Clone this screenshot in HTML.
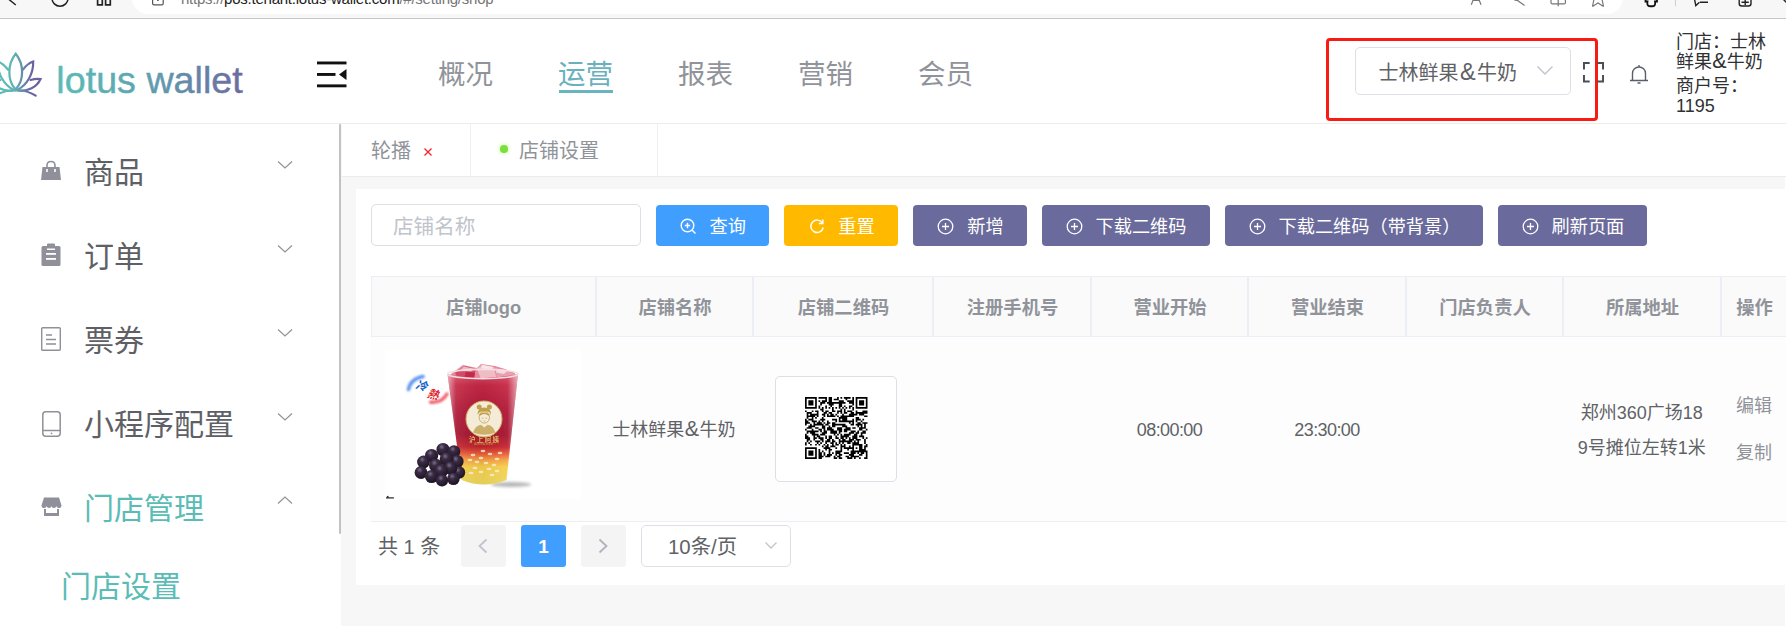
<!DOCTYPE html>
<html lang="zh-CN">
<head>
<meta charset="utf-8">
<title>店铺设置</title>
<style>
*{box-sizing:border-box;margin:0;padding:0}
html,body{width:1786px;height:626px;overflow:hidden;background:#fff}
body{font-family:"Liberation Sans","Noto Sans CJK SC",sans-serif;color:#606266;position:relative}
.a{position:absolute;white-space:nowrap}
/* browser chrome */
#chrome{left:0;top:0;width:1786px;height:18px;background:#f7f7f7}
#chromeline{left:0;top:18px;width:1786px;height:1px;background:#c6c6c6}
#addr{left:132px;top:-20px;width:1491px;height:33.7px;background:#fff;border-radius:16px}
#url{left:181px;top:-11px;font-size:15px;line-height:20px;color:#767676;letter-spacing:-0.24px}
#url b{font-weight:400;color:#1b1b1b}
/* header */
#header{left:0;top:19px;width:1786px;height:104px;background:#fff}
#hline{left:0;top:123px;width:1786px;height:1px;background:#ececec}
.nav{font-size:27.5px;line-height:40px;color:#909399;top:54.5px}
#logo-text{left:56px;top:56px;font-size:37px;line-height:44px;letter-spacing:0.5px;
  background:linear-gradient(90deg,#5bbcb6 0%,#5fa5b0 45%,#6b6aa0 100%);-webkit-background-clip:text;background-clip:text;color:transparent}
/* sidebar */
#side{left:0;top:124px;width:339px;height:502px;background:#fff}
.mi{left:84px;font-size:30px;line-height:44px;color:#5e6066}
.chev{left:277px}
#sbar{left:339px;top:124px;width:2.4px;height:410px;background:#c2c2c2;border-radius:1.2px}
/* main */
#main{left:341px;top:124px;width:1444px;height:502px;background:#f7f7f7}
#tabs{left:342px;top:124px;width:1444px;height:52px;background:#fff}
#tabsline{left:342px;top:176px;width:1444px;height:1px;background:#ececec}
.tab{top:135.9px;font-size:20px;line-height:30px;color:#909399}
#card{left:356px;top:189px;width:1430px;height:396px;background:#fff}
#inp{left:371px;top:204px;width:270px;height:42px;border:1px solid #dcdfe6;border-radius:5px;background:#fff}
#ph{left:393px;top:211.8px;font-size:20.6px;line-height:30px;color:#c0c4cc}
.btn{top:205px;height:41px;border-radius:4px;color:#fff;font-size:18.2px;line-height:41px}
.btn span{position:absolute;top:2.3px;white-space:nowrap}
.btn svg{position:absolute;top:13px}
.pur{background:#6a6a9c}
/* table */
#thead{left:371px;top:276px;width:1415px;height:61px;background:#fafafa;border-top:1px solid #ebeef5;border-bottom:1px solid #ebeef5;border-left:1px solid #ebeef5}
.th{top:276px;height:61px;border-right:2px solid #ebeef5;font-size:18.3px;font-weight:bold;color:#909399;line-height:63.4px;padding-left:1px;text-align:center}
#row{left:371px;top:337px;width:1415px;height:184px;background:#fdfdfd}
#rowline{left:371px;top:521px;width:1415px;height:1px;background:#ebeef5}
.td{font-size:18px;line-height:30px;color:#606266;text-align:center}
</style>
</head>
<body>
<!-- browser chrome -->
<div class="a" id="chrome"></div>
<div class="a" id="addr"></div>
<div class="a" id="url">https://<b>pos.tenant.lotus-wallet.com</b>/#/setting/shop</div>
<svg class="a" style="left:0;top:0" width="1786" height="18" viewBox="0 0 1786 18" fill="none" stroke="#222" stroke-width="1.5">
<path d="M9 -0.5L15.8 5"/>
<circle cx="60" cy="-1.8" r="8"/>
<path d="M97.6 -2V4.9H102.3V-1H105.6V4.9H110.3V-2" stroke-width="1.7"/>
<path d="M152.6 -2V3.4Q152.6 4.8 154 4.8H161.8Q163.2 4.8 163.2 3.4V-2" stroke="#555" stroke-width="1.2"/>
<circle cx="157.9" cy="0.2" r="0.9" fill="#555" stroke="none"/>
<g stroke="#777" stroke-width="1.2">
<path d="M1471.3 4.8L1473.5 -1M1481 4.8L1478.8 -1M1473 0.3H1479.3"/>
<path d="M1513 -1.5Q1515 1.2 1518.5 0.2M1517.5 0.5L1524.6 5.5"/>
<path d="M1551 -2V2.8Q1551 3.9 1552.2 3.9H1564.2Q1565.4 3.9 1565.4 2.8V-2M1558.2 -2V6.2"/>
<path d="M1592.5 6.5L1594 -1M1603.5 6.5L1602 -1M1592.5 6.5L1598 3L1603.5 6.5"/>
</g>
<path d="M1645.5 -1V1.5H1647.5Q1646.5 6.8 1651.3 6.2Q1656 6.8 1655 1.5H1657V-1" stroke="#111" stroke-width="1.8"/>
<path d="M1675.5 0V6.2" stroke="#cfcfcf" stroke-width="1"/>
<path d="M1694.5 -1L1695.8 5.6L1699.5 2.2M1700 2.3H1708" stroke="#222" stroke-width="1.4"/>
<path d="M1739.2 -2V3.5Q1739.2 6 1741.7 6H1748.5Q1751 6 1751 3.5V-2M1741.5 2.2H1748.8M1745.2 -1V5" stroke="#222" stroke-width="1.4"/>
<path d="M1783 -1L1787 3" stroke="#222" stroke-width="1.4"/>
</svg>
<div class="a" id="chromeline"></div>

<!-- header -->
<div class="a" id="header"></div>
<div class="a" id="hline"></div>
<svg class="a" id="lotus" style="left:0;top:40px;overflow:visible" width="60" height="70" viewBox="0 40 60 70" fill="none" stroke-width="2.2" stroke-linecap="round">
<defs><linearGradient id="lg" gradientUnits="userSpaceOnUse" x1="5" y1="0" x2="32" y2="0"><stop offset="0" stop-color="#5bbcb6"/><stop offset="0.35" stop-color="#5fb0b4"/><stop offset="1" stop-color="#6b62a0"/></linearGradient></defs>
<g stroke="url(#lg)">
<path d="M15.5 89.5C7 80 7.5 64 15.7 53.8C24 64 24.5 80 15.5 89.5Z"/>
<path d="M23 69.5Q27.5 63.5 33.2 61.5C33.5 74 27 85 17.5 89.8"/>
<path d="M30.5 80Q35.5 78.5 40.5 79C37 87 28 92 17 90.5"/>
<path d="M15.5 90.3C24 90 30 92 35.7 95.7"/>
<path d="M8 69.5Q3.5 63.5 -2.2 61.5C-2.5 74 4 85 13.5 89.8"/>
<path d="M0.5 80Q-4.5 78.5 -9.5 79C-6 87 3 92 14 90.5"/>
<path d="M15.5 90.3C7 90 1 92 -4.7 95.7"/>
</g>
</svg>
<svg class="a" style="left:50px;top:50px" width="210" height="56" viewBox="0 0 210 56"><defs><linearGradient id="lg2" gradientUnits="userSpaceOnUse" x1="6" y1="0" x2="194" y2="0"><stop offset="0" stop-color="#5bbcb6"/><stop offset="0.45" stop-color="#5fa5b0"/><stop offset="1" stop-color="#6b6aa0"/></linearGradient></defs><text x="6.3" y="42.5" font-family="'Liberation Sans',sans-serif" font-size="37.6" letter-spacing="0.05" fill="url(#lg2)" stroke="url(#lg2)" stroke-width="0.45">lotus wallet</text></svg>

<svg class="a" style="left:316.5px;top:61px" width="32" height="28" viewBox="0 0 32 28"><rect x="0" y="0.5" width="29.5" height="2.9" fill="#111"/><rect x="0" y="12" width="18.5" height="2.9" fill="#111"/><rect x="0" y="23.4" width="29.5" height="2.9" fill="#111"/><path d="M29.5 8 L29.5 19 L22 13.5Z" fill="#111"/></svg>

<div class="a nav" style="left:438px">概况</div>
<div class="a nav" style="left:558px;color:#6ab0bd">运营</div>
<div class="a" style="left:559px;top:89.7px;width:54px;height:3.8px;background:#6ab3c0"></div>
<div class="a nav" style="left:678px">报表</div>
<div class="a nav" style="left:798px">营销</div>
<div class="a nav" style="left:918px">会员</div>

<div class="a" style="left:1355px;top:47px;width:216px;height:48px;border:1px solid #dcdfe6;border-radius:5px;background:#fff"></div>
<div class="a" style="left:1378.5px;top:58px;font-size:20px;line-height:30px;color:#606266">士林鲜果<span style="font-size:23.5px;line-height:0;margin:0 1.2px 0 1.6px">&amp;</span>牛奶</div>
<svg class="a" style="left:1536px;top:65px" width="18" height="12" viewBox="0 0 18 12"><path d="M1.5 1.5 L9 9 L16.5 1.5" fill="none" stroke="#c0c4cc" stroke-width="1.4"/></svg>
<div class="a" style="left:1326px;top:38px;width:272px;height:83px;border:3px solid #fa1a14;border-radius:4px"></div>
<svg class="a" style="left:1583px;top:62px" width="21" height="20.5" viewBox="0 0 22 22" preserveAspectRatio="none" fill="none" stroke="#4a4f57" stroke-width="2.1"><path d="M1 8V1H7M15 1H21V8M21 14V21H15M7 21H1V14"/></svg>
<svg class="a" style="left:1628px;top:63px" width="22" height="22" viewBox="0 0 22 22" fill="none" stroke="#5a5e66" stroke-width="1.4"><path d="M2 17.5H20M4.5 17.5V10.5C4.5 6.5 7.5 4 11 4S17.5 6.5 17.5 10.5V17.5M11 4V2M9.5 20H12.5"/></svg>
<div class="a" style="left:1676px;top:32px;font-size:18px;line-height:20px;color:#303133">门店：士林<br>鲜果<span style="font-size:21.5px;line-height:0;margin:0 0.2px">&amp;</span>牛奶</div><div class="a" style="left:1676px;top:76px;font-size:18px;line-height:20px;color:#303133">商户号：<br>1195</div>

<!-- sidebar -->
<div class="a" id="side"></div>
<div class="a mi" style="top:151px">商品</div>
<div class="a mi" style="top:235px">订单</div>
<div class="a mi" style="top:319px">票券</div>
<div class="a mi" style="top:403px">小程序配置</div>
<div class="a mi" style="top:487px;color:#5bbcb6">门店管理</div>
<div class="a mi" style="top:565px;left:61px;color:#5bbcb6">门店设置</div>
<svg class="a chev" style="top:160px" width="16" height="10" viewBox="0 0 16 10"><path d="M1 1.5 L8 8 L15 1.5" fill="none" stroke="#909399" stroke-width="1.2"/></svg>
<svg class="a chev" style="top:244px" width="16" height="10" viewBox="0 0 16 10"><path d="M1 1.5 L8 8 L15 1.5" fill="none" stroke="#909399" stroke-width="1.2"/></svg>
<svg class="a chev" style="top:328px" width="16" height="10" viewBox="0 0 16 10"><path d="M1 1.5 L8 8 L15 1.5" fill="none" stroke="#909399" stroke-width="1.2"/></svg>
<svg class="a chev" style="top:412px" width="16" height="10" viewBox="0 0 16 10"><path d="M1 1.5 L8 8 L15 1.5" fill="none" stroke="#909399" stroke-width="1.2"/></svg>
<svg class="a chev" style="top:495px" width="16" height="10" viewBox="0 0 16 10"><path d="M1 8.5 L8 2 L15 8.5" fill="none" stroke="#909399" stroke-width="1.2"/></svg>
<!-- sidebar icons -->
<svg class="a" style="left:40px;top:160px" width="22" height="22" viewBox="0 0 22 22"><path d="M2.5 7H19.5L21 20H1Z" fill="#8f9099"/><path d="M7 9V5.5C7 2.8 8.8 1.5 11 1.5S15 2.8 15 5.5V9" fill="none" stroke="#8f9099" stroke-width="1.6"/><rect x="6.2" y="9" width="1.6" height="3" fill="#fff"/><rect x="14.2" y="9" width="1.6" height="3" fill="#fff"/></svg>
<svg class="a" style="left:41px;top:243px" width="20" height="24" viewBox="0 0 20 24"><rect x="0.5" y="3" width="19" height="20" rx="1.5" fill="#8f9099"/><rect x="6" y="0.5" width="8" height="5" rx="1" fill="#8f9099"/><rect x="5" y="10" width="10" height="1.8" fill="#fff"/><rect x="5" y="15" width="10" height="1.8" fill="#fff"/><rect x="6" y="5.5" width="8" height="1.5" fill="#fff"/></svg>
<svg class="a" style="left:41px;top:327px" width="20" height="24" viewBox="0 0 20 24" fill="none" stroke="#8f9099" stroke-width="1.4"><rect x="0.7" y="0.7" width="18.6" height="22.6" rx="1"/><path d="M5 8H11M5 12.5H15M5 17H15"/></svg>
<svg class="a" style="left:42px;top:411px" width="19" height="26" viewBox="0 0 19 26" fill="none" stroke="#8f9099" stroke-width="1.5"><rect x="0.8" y="0.8" width="17.4" height="24.4" rx="3"/><path d="M1 19.5H18"/><circle cx="9.5" cy="22.3" r="0.9" fill="#8f9099" stroke="none"/></svg>
<svg class="a" style="left:41px;top:497px" width="21" height="21" viewBox="0 0 21 21"><path d="M3 0.5H18L20.5 8.5C20.5 10.5 19 11 17.8 11S15.6 10.3 15.4 9C15.2 10.3 14 11 12.9 11S10.7 10.3 10.5 9C10.3 10.3 9.2 11 8.1 11S5.8 10.3 5.6 9C5.4 10.3 4.3 11 3.2 11S0.5 10.5 0.5 8.5Z" fill="#8f9099"/><path d="M3 12V19H18V12H16V16H5V12Z" fill="#8f9099"/></svg>

<div class="a" id="main"></div>
<div class="a" id="sbar"></div>
<div class="a" id="tabs"></div>
<div class="a" id="tabsline"></div>
<div class="a" style="left:470px;top:124px;width:1px;height:52px;background:#f0f0f0"></div>
<div class="a" style="left:657px;top:124px;width:1px;height:52px;background:#f0f0f0"></div>
<div class="a tab" style="left:371px">轮播</div>
<svg class="a" style="left:423px;top:147px" width="10" height="10" viewBox="0 0 10 10"><path d="M1.5 1.5L8.5 8.5M8.5 1.5L1.5 8.5" stroke="#f5222d" stroke-width="1.3"/></svg>
<div class="a" style="left:500.2px;top:145px;width:7.6px;height:7.6px;border-radius:50%;background:#7be03a;box-shadow:0 0 4px 1px #d6f7c0"></div>
<div class="a tab" style="left:519px">店铺设置</div>

<div class="a" id="card"></div>
<div class="a" id="inp"></div>
<div class="a" id="ph">店铺名称</div>

<div class="a btn" style="left:656px;width:113px;background:#409eff"><svg style="left:24px" width="17" height="17" viewBox="0 0 17 17" fill="none" stroke="#fff" stroke-width="1.4"><circle cx="7.5" cy="7.5" r="6.3"/><path d="M12.2 12.2L15.5 15.5M4.8 7.5H10.2M7.5 4.8V10.2"/></svg><span style="left:53.5px">查询</span></div>
<div class="a btn" style="left:784px;width:114px;background:#ffba00"><svg style="left:25px" width="16" height="16" viewBox="0 0 16 16" fill="none" stroke="#fff" stroke-width="1.5"><path d="M13.5 5.2A6.2 6.2 0 1 0 14.2 9.5M13.8 1.5V5.4H9.9"/></svg><span style="left:54.3px">重置</span></div>
<div class="a btn pur" style="left:913px;width:114px"><svg style="left:24px" width="17" height="17" viewBox="0 0 17 17" fill="none" stroke="#fff" stroke-width="1.3"><circle cx="8.5" cy="8.5" r="7.3"/><path d="M5 8.5H12M8.5 5V12"/></svg><span style="left:54.3px">新增</span></div>
<div class="a btn pur" style="left:1042px;width:168px"><svg style="left:24px" width="17" height="17" viewBox="0 0 17 17" fill="none" stroke="#fff" stroke-width="1.3"><circle cx="8.5" cy="8.5" r="7.3"/><path d="M5 8.5H12M8.5 5V12"/></svg><span style="left:53.5px">下载二维码</span></div>
<div class="a btn pur" style="left:1225px;width:258px"><svg style="left:24px" width="17" height="17" viewBox="0 0 17 17" fill="none" stroke="#fff" stroke-width="1.3"><circle cx="8.5" cy="8.5" r="7.3"/><path d="M5 8.5H12M8.5 5V12"/></svg><span style="left:53.5px">下载二维码（带背景）</span></div>
<div class="a btn pur" style="left:1498px;width:149px"><svg style="left:24px" width="17" height="17" viewBox="0 0 17 17" fill="none" stroke="#fff" stroke-width="1.3"><circle cx="8.5" cy="8.5" r="7.3"/><path d="M5 8.5H12M8.5 5V12"/></svg><span style="left:53.5px">刷新页面</span></div>

<!-- table -->
<div class="a" id="thead"></div>
<div class="a th" style="left:371px;width:226px">店铺logo</div>
<div class="a th" style="left:597px;width:157px">店铺名称</div>
<div class="a th" style="left:754px;width:180px">店铺二维码</div>
<div class="a th" style="left:934px;width:158px">注册手机号</div>
<div class="a th" style="left:1092px;width:157px">营业开始</div>
<div class="a th" style="left:1249px;width:158px">营业结束</div>
<div class="a th" style="left:1407px;width:157px">门店负责人</div>
<div class="a th" style="left:1564px;width:158px">所属地址</div>
<div class="a th" style="left:1722px;width:64px;border-right:0">操作</div>
<div class="a" id="row"></div>
<div class="a" id="rowline"></div>

<svg class="a" id="pimg" style="left:385px;top:349px" width="196" height="150" viewBox="0 0 196 150">
<defs>
<linearGradient id="cupv" x1="0" y1="0" x2="0" y2="1">
<stop offset="0" stop-color="#d8506a"/><stop offset="0.10" stop-color="#c62845"/><stop offset="0.35" stop-color="#ae1836"/><stop offset="0.55" stop-color="#a51530"/><stop offset="0.66" stop-color="#c4252f"/><stop offset="0.72" stop-color="#e85a38"/><stop offset="0.78" stop-color="#f5a445"/><stop offset="0.84" stop-color="#f6cf4c"/><stop offset="1" stop-color="#ecd75e"/>
</linearGradient>
<linearGradient id="cuph" x1="0" y1="0" x2="1" y2="0">
<stop offset="0" stop-color="#fff" stop-opacity="0.55"/><stop offset="0.12" stop-color="#fff" stop-opacity="0.08"/><stop offset="0.5" stop-color="#000" stop-opacity="0.04"/><stop offset="0.85" stop-color="#fff" stop-opacity="0.05"/><stop offset="1" stop-color="#fff" stop-opacity="0.6"/>
</linearGradient>
<radialGradient id="berry" cx="0.4" cy="0.3" r="0.75"><stop offset="0" stop-color="#77708a"/><stop offset="0.3" stop-color="#3b2c44"/><stop offset="1" stop-color="#1a111f"/></radialGradient>
<filter id="bl1" x="-30%" y="-30%" width="160%" height="160%"><feGaussianBlur stdDeviation="1"/></filter>
<filter id="bl2" x="-30%" y="-80%" width="160%" height="260%"><feGaussianBlur stdDeviation="1.6"/></filter>
<filter id="bl3" x="-10%" y="-10%" width="120%" height="120%"><feGaussianBlur stdDeviation="0.35"/></filter>
</defs>
<rect width="196" height="150" fill="#fff"/>
<ellipse cx="126" cy="135.5" rx="20" ry="2.6" fill="#000" opacity="0.28" filter="url(#bl2)"/>
<g filter="url(#bl3)">
<!-- ice -->
<path d="M66 25 L78 16 L92 19 L96 15 L110 17 L120 20 L130 24 L128 33 L68 33Z" fill="#e58a9c"/>
<path d="M70 24 L80 17 L91 20 L88 30 L74 31Z" fill="#d44a66"/>
<path d="M92 20 L97 15.5 L109 18 L111 28 L96 30Z" fill="#f0bcc6"/>
<path d="M110 19 L120 21 L129 25 L124 31 L112 29Z" fill="#e9a0af"/>
<path d="M81 22 L90 24 L89 31 L79 30Z" fill="#c22a49"/><path d="M97 16 L108 18 L106 21 L96 19.5Z" fill="#fbe6ea"/><path d="M79 17.5 L90 20 L86 22.5 L74 22Z" fill="#f1b7c2"/><path d="M112 20 L122 22 L119 25 L111 23.5Z" fill="#f8d9df"/>
<!-- cup -->
<path d="M62.5 25 Q98 33 133 25 L121.5 131 Q99 140 76.5 131Z" fill="url(#cupv)"/>
<path d="M62.5 25 Q98 33 133 25 L121.5 131 Q99 140 76.5 131Z" fill="url(#cuph)"/>
<ellipse cx="97.8" cy="25" rx="35.3" ry="4.6" fill="none" stroke="#f4dfe3" stroke-width="1.6"/>
<!-- pearls -->
<g fill="#fbeed4" opacity="0.8"><ellipse cx="88" cy="106" rx="2.4" ry="1.2"/><ellipse cx="96" cy="109" rx="2.4" ry="1.2"/><ellipse cx="105" cy="105" rx="2.4" ry="1.2"/><ellipse cx="112" cy="110" rx="2.4" ry="1.2"/><ellipse cx="92" cy="113" rx="2.4" ry="1.2"/><ellipse cx="101" cy="114" rx="2.4" ry="1.2"/><ellipse cx="109" cy="116" rx="2.4" ry="1.2"/><ellipse cx="85" cy="111" rx="2.4" ry="1.2"/><ellipse cx="115" cy="104" rx="2.4" ry="1.2"/><ellipse cx="98" cy="102" rx="2.4" ry="1.2"/><ellipse cx="90" cy="119" rx="2.4" ry="1.2"/><ellipse cx="104" cy="120" rx="2.4" ry="1.2"/><ellipse cx="112" cy="122" rx="2.4" ry="1.2"/><ellipse cx="96" cy="123" rx="2.4" ry="1.2"/><ellipse cx="86" cy="124" rx="2.4" ry="1.2"/><ellipse cx="107" cy="126" rx="2.4" ry="1.2"/></g>
<!-- logo -->
<circle cx="99" cy="70" r="18" fill="#f4ecd9" stroke="#cfae62" stroke-width="1"/>
<g fill="#c2a04c"><circle cx="94.2" cy="58" r="2.5"/><circle cx="104.4" cy="58" r="2.5"/><path d="M92.6 66 Q92.4 58.6 99.3 58.6 Q106.2 58.6 106 66 L104.6 63.5 Q99 61 94 63.8Z"/><path d="M88 83.5 Q90.5 76.5 96 75.8 L99.3 78.5 L102.6 75.8 Q108 76.5 110.5 83.5 Q99.3 88 88 83.5Z" opacity="0.8"/></g>
<ellipse cx="99.3" cy="68.3" rx="5.2" ry="5.8" fill="#f4ecd9" stroke="#c2a04c" stroke-width="0.8"/>
<path d="M94.5 66 Q99 62.5 104.2 66" fill="none" stroke="#c2a04c" stroke-width="1.6"/>
<path d="M96.8 69.2H98.4M100.4 69.2H102M98.6 71.8Q99.4 72.4 100.2 71.8" fill="none" stroke="#b08c3a" stroke-width="0.6"/>
<text x="99" y="92.5" text-anchor="middle" font-family="'Liberation Sans','Noto Sans CJK SC',sans-serif" font-size="6.5" font-weight="bold" fill="#dcb95c" textLength="30">沪上阿姨</text>
<text x="99" y="96" text-anchor="middle" font-family="'Liberation Sans',sans-serif" font-size="2.6" fill="#c9a653">AUNTEA JENNY</text>
<!-- berries -->
<g fill="url(#berry)"><circle cx="58" cy="100.5" r="6.6"/><circle cx="69" cy="102.5" r="6.3"/><circle cx="46.6" cy="106.5" r="6.6"/><circle cx="72" cy="112.5" r="6.6"/><circle cx="38.5" cy="113" r="6.4"/><circle cx="61.6" cy="110" r="6.9"/><circle cx="50.7" cy="116.5" r="6.7"/><circle cx="74" cy="123.5" r="6.2"/><circle cx="65.6" cy="119" r="6.7"/><circle cx="36" cy="123.5" r="6.4"/><circle cx="56" cy="122" r="6.9"/><circle cx="46.6" cy="127.5" r="6.6"/><circle cx="68.4" cy="129.8" r="6.3"/><circle cx="57" cy="131.5" r="6.1"/></g>
</g>
<!-- badge -->
<path d="M23.5 40.5 Q25.5 30 38 27.6" fill="none" stroke="#4d8cf0" stroke-width="3.6" stroke-linecap="round" filter="url(#bl1)" opacity="0.9"/>
<path d="M45.5 53.2 Q57 54 62 45" fill="none" stroke="#f0505a" stroke-width="3.4" stroke-linecap="round" filter="url(#bl1)" opacity="0.9"/>
<text x="31" y="40.5" font-family="'Liberation Sans','Noto Sans CJK SC',sans-serif" font-size="11.5" font-weight="bold" font-style="italic" fill="#1b5fc8" transform="rotate(14 36 36)">冷</text>
<text x="42.5" y="49.5" font-family="'Liberation Sans','Noto Sans CJK SC',sans-serif" font-size="11.5" font-weight="bold" font-style="italic" fill="#e0262e" transform="rotate(14 48 45)">熱</text>
<path d="M1 148.9H8.9" fill="none" stroke="#222" stroke-width="1.2"/><path d="M2.7 146.9V149" fill="none" stroke="#333" stroke-width="1.7"/>
</svg>
<div class="a td" style="left:595.4px;top:415.3px;width:157px">士林鲜果<span style="font-size:21.5px;line-height:0;margin:0 0.4px">&amp;</span>牛奶</div>
<div class="a" style="left:775px;top:376px;width:122px;height:106px;border:1px solid #dcdfe6;border-radius:5px;background:#fff"></div>
<svg class="a" id="qr" style="left:805px;top:397px" width="62.5" height="62" viewBox="0 0 37 37" preserveAspectRatio="none"><rect width="37" height="37" fill="#fff"/><path fill="#000" d="M0 0h7v1h-7zM8 0h5v1h-5zM14 0h2v1h-2zM19 0h1v1h-1zM21 0h1v1h-1zM23 0h4v1h-4zM28 0h1v1h-1zM30 0h7v1h-7zM0 1h1v1h-1zM6 1h1v1h-1zM12 1h1v1h-1zM14 1h2v1h-2zM17 1h3v1h-3zM24 1h1v1h-1zM28 1h1v1h-1zM30 1h1v1h-1zM36 1h1v1h-1zM0 2h1v1h-1zM2 2h3v1h-3zM6 2h1v1h-1zM8 2h1v1h-1zM10 2h3v1h-3zM14 2h2v1h-2zM20 2h3v1h-3zM25 2h4v1h-4zM30 2h1v1h-1zM32 2h3v1h-3zM36 2h1v1h-1zM0 3h1v1h-1zM2 3h3v1h-3zM6 3h1v1h-1zM9 3h3v1h-3zM13 3h11v1h-11zM26 3h3v1h-3zM30 3h1v1h-1zM32 3h3v1h-3zM36 3h1v1h-1zM0 4h1v1h-1zM2 4h3v1h-3zM6 4h1v1h-1zM9 4h1v1h-1zM14 4h3v1h-3zM20 4h2v1h-2zM28 4h1v1h-1zM30 4h1v1h-1zM32 4h3v1h-3zM36 4h1v1h-1zM0 5h1v1h-1zM6 5h1v1h-1zM8 5h1v1h-1zM12 5h1v1h-1zM15 5h1v1h-1zM20 5h2v1h-2zM23 5h1v1h-1zM26 5h2v1h-2zM30 5h1v1h-1zM36 5h1v1h-1zM0 6h7v1h-7zM8 6h1v1h-1zM10 6h1v1h-1zM12 6h1v1h-1zM14 6h1v1h-1zM16 6h1v1h-1zM18 6h1v1h-1zM20 6h1v1h-1zM22 6h1v1h-1zM24 6h1v1h-1zM26 6h1v1h-1zM28 6h1v1h-1zM30 6h7v1h-7zM9 7h2v1h-2zM16 7h1v1h-1zM21 7h1v1h-1zM23 7h1v1h-1zM28 7h1v1h-1zM0 8h1v1h-1zM4 8h1v1h-1zM6 8h2v1h-2zM10 8h1v1h-1zM12 8h2v1h-2zM16 8h2v1h-2zM19 8h3v1h-3zM23 8h1v1h-1zM25 8h3v1h-3zM30 8h1v1h-1zM34 8h3v1h-3zM1 9h3v1h-3zM7 9h1v1h-1zM11 9h2v1h-2zM14 9h2v1h-2zM19 9h1v1h-1zM21 9h1v1h-1zM23 9h2v1h-2zM27 9h2v1h-2zM30 9h7v1h-7zM1 10h1v1h-1zM3 10h5v1h-5zM10 10h2v1h-2zM13 10h1v1h-1zM15 10h2v1h-2zM18 10h1v1h-1zM22 10h1v1h-1zM26 10h5v1h-5zM32 10h3v1h-3zM1 11h5v1h-5zM7 11h1v1h-1zM11 11h1v1h-1zM13 11h5v1h-5zM19 11h1v1h-1zM21 11h8v1h-8zM35 11h2v1h-2zM1 12h1v1h-1zM4 12h1v1h-1zM6 12h1v1h-1zM10 12h1v1h-1zM20 12h5v1h-5zM30 12h2v1h-2zM0 13h1v1h-1zM2 13h3v1h-3zM9 13h3v1h-3zM16 13h3v1h-3zM20 13h1v1h-1zM22 13h3v1h-3zM28 13h1v1h-1zM30 13h3v1h-3zM34 13h1v1h-1zM0 14h2v1h-2zM4 14h3v1h-3zM8 14h1v1h-1zM10 14h1v1h-1zM13 14h1v1h-1zM18 14h1v1h-1zM20 14h9v1h-9zM30 14h1v1h-1zM33 14h1v1h-1zM0 15h3v1h-3zM5 15h1v1h-1zM7 15h3v1h-3zM11 15h1v1h-1zM13 15h2v1h-2zM16 15h2v1h-2zM26 15h1v1h-1zM28 15h1v1h-1zM31 15h2v1h-2zM34 15h3v1h-3zM0 16h1v1h-1zM3 16h1v1h-1zM5 16h6v1h-6zM12 16h2v1h-2zM16 16h8v1h-8zM27 16h2v1h-2zM30 16h4v1h-4zM35 16h1v1h-1zM2 17h4v1h-4zM10 17h2v1h-2zM14 17h1v1h-1zM16 17h2v1h-2zM22 17h3v1h-3zM31 17h1v1h-1zM33 17h1v1h-1zM35 17h1v1h-1zM1 18h3v1h-3zM6 18h2v1h-2zM10 18h2v1h-2zM13 18h3v1h-3zM19 18h3v1h-3zM24 18h3v1h-3zM28 18h2v1h-2zM32 18h4v1h-4zM0 19h1v1h-1zM4 19h1v1h-1zM8 19h2v1h-2zM11 19h1v1h-1zM13 19h4v1h-4zM19 19h3v1h-3zM23 19h4v1h-4zM32 19h2v1h-2zM36 19h1v1h-1zM1 20h7v1h-7zM9 20h1v1h-1zM11 20h2v1h-2zM15 20h4v1h-4zM20 20h2v1h-2zM23 20h2v1h-2zM27 20h3v1h-3zM31 20h1v1h-1zM34 20h2v1h-2zM1 21h1v1h-1zM3 21h3v1h-3zM10 21h3v1h-3zM15 21h4v1h-4zM20 21h1v1h-1zM26 21h3v1h-3zM30 21h2v1h-2zM33 21h3v1h-3zM0 22h1v1h-1zM4 22h4v1h-4zM9 22h3v1h-3zM17 22h1v1h-1zM19 22h1v1h-1zM21 22h1v1h-1zM23 22h4v1h-4zM29 22h2v1h-2zM33 22h1v1h-1zM0 23h2v1h-2zM5 23h1v1h-1zM7 23h2v1h-2zM12 23h1v1h-1zM14 23h2v1h-2zM18 23h1v1h-1zM21 23h5v1h-5zM28 23h3v1h-3zM32 23h3v1h-3zM0 24h3v1h-3zM5 24h2v1h-2zM8 24h3v1h-3zM12 24h1v1h-1zM14 24h2v1h-2zM18 24h2v1h-2zM21 24h2v1h-2zM24 24h1v1h-1zM26 24h1v1h-1zM28 24h3v1h-3zM34 24h1v1h-1zM36 24h1v1h-1zM1 25h2v1h-2zM5 25h1v1h-1zM9 25h2v1h-2zM13 25h2v1h-2zM16 25h1v1h-1zM20 25h1v1h-1zM22 25h2v1h-2zM26 25h3v1h-3zM30 25h3v1h-3zM35 25h1v1h-1zM1 26h1v1h-1zM3 26h1v1h-1zM6 26h3v1h-3zM10 26h1v1h-1zM12 26h3v1h-3zM16 26h2v1h-2zM20 26h8v1h-8zM29 26h1v1h-1zM31 26h1v1h-1zM35 26h1v1h-1zM0 27h1v1h-1zM2 27h1v1h-1zM7 27h1v1h-1zM9 27h1v1h-1zM12 27h1v1h-1zM15 27h2v1h-2zM18 27h1v1h-1zM20 27h1v1h-1zM22 27h1v1h-1zM25 27h2v1h-2zM28 27h4v1h-4zM35 27h1v1h-1zM0 28h1v1h-1zM3 28h1v1h-1zM6 28h1v1h-1zM8 28h1v1h-1zM11 28h1v1h-1zM13 28h1v1h-1zM16 28h1v1h-1zM18 28h2v1h-2zM21 28h1v1h-1zM23 28h1v1h-1zM28 28h6v1h-6zM36 28h1v1h-1zM10 29h1v1h-1zM12 29h2v1h-2zM15 29h3v1h-3zM21 29h3v1h-3zM26 29h1v1h-1zM28 29h1v1h-1zM32 29h2v1h-2zM35 29h2v1h-2zM0 30h7v1h-7zM11 30h4v1h-4zM18 30h1v1h-1zM21 30h1v1h-1zM23 30h6v1h-6zM30 30h1v1h-1zM32 30h2v1h-2zM35 30h1v1h-1zM0 31h1v1h-1zM6 31h1v1h-1zM8 31h1v1h-1zM12 31h1v1h-1zM14 31h2v1h-2zM21 31h1v1h-1zM25 31h1v1h-1zM28 31h1v1h-1zM32 31h4v1h-4zM0 32h1v1h-1zM2 32h3v1h-3zM6 32h1v1h-1zM8 32h1v1h-1zM10 32h1v1h-1zM14 32h1v1h-1zM18 32h4v1h-4zM27 32h10v1h-10zM0 33h1v1h-1zM2 33h3v1h-3zM6 33h1v1h-1zM8 33h2v1h-2zM11 33h1v1h-1zM14 33h1v1h-1zM16 33h1v1h-1zM18 33h3v1h-3zM23 33h3v1h-3zM27 33h3v1h-3zM31 33h1v1h-1zM33 33h2v1h-2zM36 33h1v1h-1zM0 34h1v1h-1zM2 34h3v1h-3zM6 34h1v1h-1zM8 34h2v1h-2zM11 34h1v1h-1zM13 34h3v1h-3zM18 34h1v1h-1zM20 34h2v1h-2zM26 34h3v1h-3zM32 34h2v1h-2zM36 34h1v1h-1zM0 35h1v1h-1zM6 35h1v1h-1zM8 35h3v1h-3zM12 35h3v1h-3zM17 35h1v1h-1zM19 35h2v1h-2zM24 35h2v1h-2zM27 35h5v1h-5zM36 35h1v1h-1zM0 36h7v1h-7zM8 36h2v1h-2zM17 36h2v1h-2zM20 36h2v1h-2zM25 36h3v1h-3zM29 36h1v1h-1zM32 36h1v1h-1zM35 36h2v1h-2z"/></svg>
<div class="a td" style="left:1092px;top:415.3px;width:155px;letter-spacing:-0.6px">08:00:00</div>
<div class="a td" style="left:1249px;top:415.3px;width:156px;letter-spacing:-0.6px">23:30:00</div>
<div class="a td" style="left:1562.7px;top:395.6px;width:158px;line-height:35.4px;white-space:normal">郑州360广场18<br>9号摊位左转1米</div>
<div class="a td" style="left:1736px;top:391.2px;color:#909399">编辑</div>
<div class="a td" style="left:1736px;top:438.2px;color:#909399">复制</div>

<!-- pagination -->
<div class="a" style="left:378px;top:532.2px;font-size:20px;line-height:30px;color:#606266">共 1 条</div>
<div class="a" style="left:461px;top:525px;width:45px;height:42px;background:#f4f4f5;border-radius:3px"></div>
<svg class="a" style="left:477px;top:538px" width="12" height="16" viewBox="0 0 12 16"><path d="M9.5 1.5L2.5 8L9.5 14.5" fill="none" stroke="#c0c4cc" stroke-width="1.8"/></svg>
<div class="a" style="left:521px;top:525px;width:45px;height:42px;background:#409eff;border-radius:3px;color:#fff;font-weight:bold;font-size:19px;line-height:44.6px;text-align:center">1</div>
<div class="a" style="left:581px;top:525px;width:45px;height:42px;background:#f4f4f5;border-radius:3px"></div>
<svg class="a" style="left:597px;top:538px" width="12" height="16" viewBox="0 0 12 16"><path d="M2.5 1.5L9.5 8L2.5 14.5" fill="none" stroke="#b0b3ba" stroke-width="1.8"/></svg>
<div class="a" style="left:641px;top:525px;width:150px;height:42px;border:1px solid #dcdfe6;border-radius:5px;background:#fff"></div>
<div class="a" style="left:668px;top:532.4px;font-size:20.4px;line-height:30px;color:#606266">10条/页</div>
<svg class="a" style="left:764px;top:541px" width="14" height="10" viewBox="0 0 14 10"><path d="M1.5 1.5L7 7L12.5 1.5" fill="none" stroke="#c0c4cc" stroke-width="1.3"/></svg>
</body>
</html>
